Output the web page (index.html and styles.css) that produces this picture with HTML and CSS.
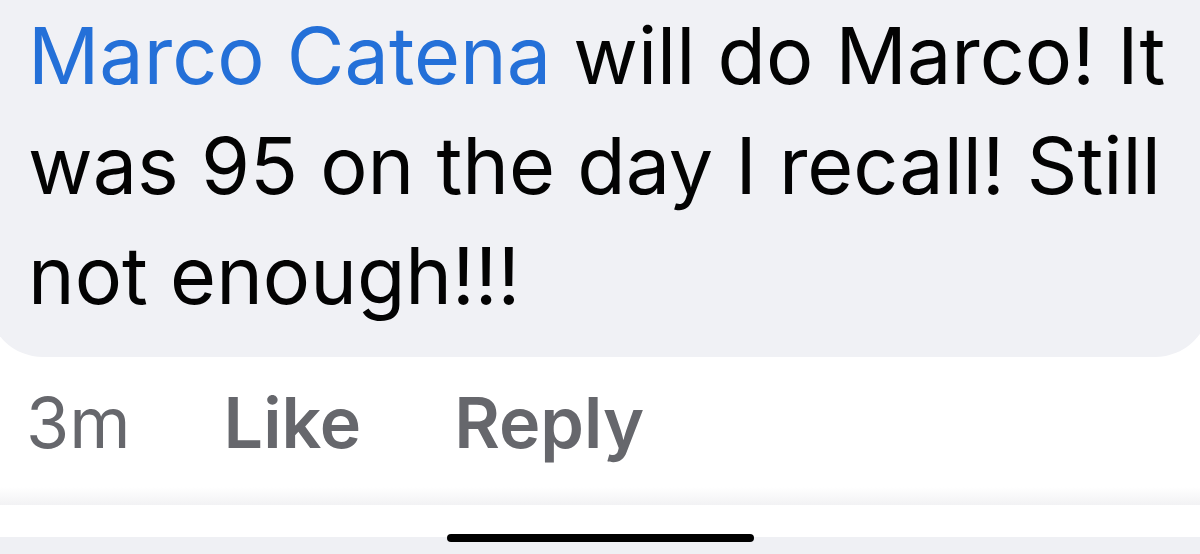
FILE: index.html
```html
<!DOCTYPE html>
<html>
<head>
<meta charset="utf-8">
<link rel="stylesheet" href="styles.css">
</head>
<body>
<div class="screen">
  <div class="bubble">
    <p class="comment"><span class="author">Marco Catena</span> will do Marco! It was 95 on the day I recall! Still not enough!!!</p>
  </div>
  <div class="actions">
    <span class="time">3m</span>
    <span class="action">Like</span>
    <span class="action">Reply</span>
  </div>
  <div class="bottom">
    <div class="shade"></div>
    <div class="strip"></div>
    <div class="home-area"><div class="home-bar"></div></div>
  </div>
</div>
</body>
</html>
```
FILE: styles.css
```css
html, body {
  margin: 0;
  padding: 0;
  background: #ffffff;
}
.screen {
  width: 1200px;
  height: 554px;
  overflow: hidden;
  display: flex;
  flex-direction: column;
  font-family: Inter, "Liberation Sans", sans-serif;
}
.bubble {
  background: #f0f1f5;
  margin: 0 -10px 0 -12px;
  height: 357px;
  flex: none;
  border-radius: 0 0 55px 55px;
  padding: 0 0 0 40px;
  box-sizing: border-box;
}
.comment {
  margin: 0;
  padding-top: 0;
  width: 1150px;
  font-size: 79px;
  line-height: 110px;
  color: #030303;
  letter-spacing: 0;
}
.author {
  color: #2470d8;
}
.actions {
  display: flex;
  gap: 93px;
  padding-left: 26px;
  height: 130px;
  flex: none;
  align-items: center;
  font-size: 70px;
  color: #66676c;
}
.time {
  font-weight: 400;
}
.action {
  font-weight: 600;
}
.bottom {
  flex: 1;
  display: flex;
  flex-direction: column;
}
.shade {
  height: 18px;
  background: linear-gradient(#ffffff, #f2f2f4);
}
.strip {
  height: 32px;
  background: #ffffff;
}
.home-area {
  flex: 1;
  background: #eff0f4;
  position: relative;
}
.home-bar {
  position: absolute;
  left: 447px;
  top: -3px;
  width: 307px;
  height: 8px;
  border-radius: 4px;
  background: #000;
}
```
